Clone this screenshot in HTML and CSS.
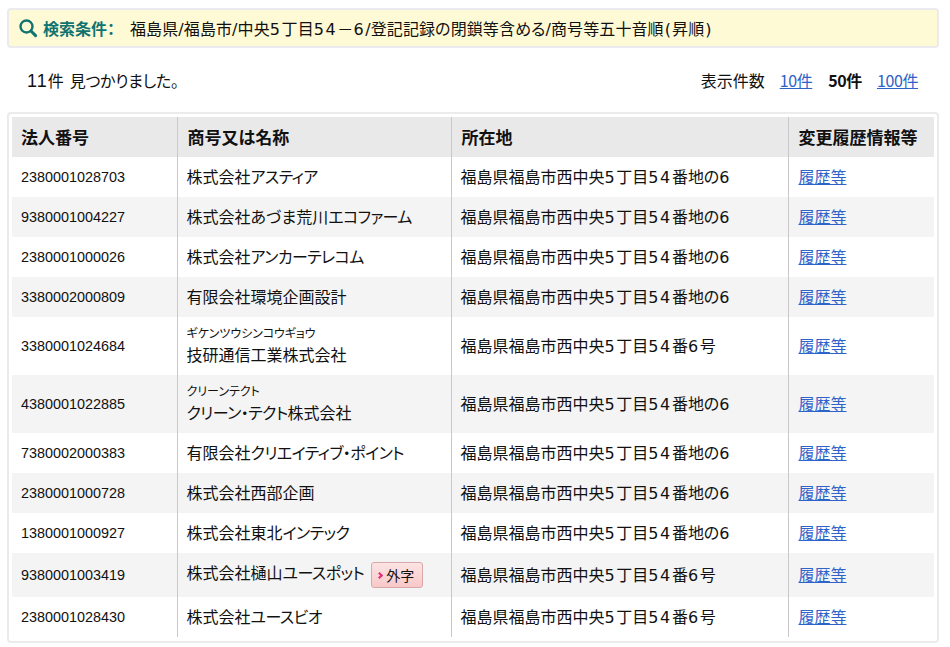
FILE: index.html
```html
<!DOCTYPE html>
<html lang="ja">
<head>
<meta charset="utf-8">
<title>検索結果</title>
<link rel="stylesheet" href="styles.css">
</head>
<body>
<div class="condition">
  <svg class="lens" width="20" height="20" viewBox="0 0 20 20"><circle cx="8.5" cy="8.5" r="6" fill="none" stroke="#0f7470" stroke-width="2.4"/><path d="M13 13l4.6 4.6" stroke="#0f7470" stroke-width="3" stroke-linecap="round"/></svg>
  <span class="cond-label">検索条件：</span>
  <span class="cond-text">福島県/福島市/中央<span class="d">5</span>丁目<span class="d">54</span>－<span class="d">6</span>/登記記録の閉鎖等含める/商号等五十音順<span class="p">(</span>昇順<span class="p">)</span></span>
</div>
<div class="summary">
  <div class="count"><span class="count-num">11</span>件 見つかりました。</div>
  <div class="pager">
    <span class="pager-label">表示件数</span>
    <a href="#">10件</a>
    <span class="pager-current">50件</span>
    <a href="#">100件</a>
  </div>
</div>
<div class="result-box">
  <table class="result">
    <colgroup><col class="c1"><col class="c2"><col class="c3"><col class="c4"></colgroup>
    <thead>
      <tr><th>法人番号</th><th>商号又は名称</th><th>所在地</th><th>変更履歴情報等</th></tr>
    </thead>
    <tbody>
      <tr><td class="num">2380001028703</td><td class="name">株式会社<span class="k">アスティア</span></td><td class="addr">福島県福島市西中央<span class="d">5</span>丁目<span class="d">54</span>番地の<span class="d">6</span></td><td class="hist"><a href="#">履歴等</a></td></tr>
      <tr><td class="num">9380001004227</td><td class="name">株式会社あづま荒川<span class="k">エコファーム</span></td><td class="addr">福島県福島市西中央<span class="d">5</span>丁目<span class="d">54</span>番地の<span class="d">6</span></td><td class="hist"><a href="#">履歴等</a></td></tr>
      <tr><td class="num">2380001000026</td><td class="name">株式会社<span class="k">アンカーテレコム</span></td><td class="addr">福島県福島市西中央<span class="d">5</span>丁目<span class="d">54</span>番地の<span class="d">6</span></td><td class="hist"><a href="#">履歴等</a></td></tr>
      <tr><td class="num">3380002000809</td><td class="name">有限会社環境企画設計</td><td class="addr">福島県福島市西中央<span class="d">5</span>丁目<span class="d">54</span>番地の<span class="d">6</span></td><td class="hist"><a href="#">履歴等</a></td></tr>
      <tr class="tall"><td class="num">3380001024684</td><td class="name"><div class="kana">ギケンツウシンコウギョウ</div>技研通信工業株式会社</td><td class="addr">福島県福島市西中央<span class="d">5</span>丁目<span class="d">54</span>番<span class="d">6</span>号</td><td class="hist"><a href="#">履歴等</a></td></tr>
      <tr class="tall"><td class="num">4380001022885</td><td class="name"><div class="kana">クリーンテクト</div><span class="k">クリーン・テクト</span>株式会社</td><td class="addr">福島県福島市西中央<span class="d">5</span>丁目<span class="d">54</span>番地の<span class="d">6</span></td><td class="hist"><a href="#">履歴等</a></td></tr>
      <tr><td class="num">7380002000383</td><td class="name">有限会社<span class="k">クリエイティブ・ポイント</span></td><td class="addr">福島県福島市西中央<span class="d">5</span>丁目<span class="d">54</span>番地の<span class="d">6</span></td><td class="hist"><a href="#">履歴等</a></td></tr>
      <tr><td class="num">2380001000728</td><td class="name">株式会社西部企画</td><td class="addr">福島県福島市西中央<span class="d">5</span>丁目<span class="d">54</span>番地の<span class="d">6</span></td><td class="hist"><a href="#">履歴等</a></td></tr>
      <tr><td class="num">1380001000927</td><td class="name">株式会社東北<span class="k">インテック</span></td><td class="addr">福島県福島市西中央<span class="d">5</span>丁目<span class="d">54</span>番地の<span class="d">6</span></td><td class="hist"><a href="#">履歴等</a></td></tr>
      <tr class="gaiji-row"><td class="num">9380001003419</td><td><div class="name-gaiji"><span class="gaiji-name">株式会社樋山<span class="k">ユースポット</span></span><span class="gaiji"><i class="chev"></i>外字</span></div></td><td class="addr">福島県福島市西中央<span class="d">5</span>丁目<span class="d">54</span>番<span class="d">6</span>号</td><td class="hist"><a href="#">履歴等</a></td></tr>
      <tr><td class="num">2380001028430</td><td class="name">株式会社<span class="k">ユースビオ</span></td><td class="addr">福島県福島市西中央<span class="d">5</span>丁目<span class="d">54</span>番<span class="d">6</span>号</td><td class="hist"><a href="#">履歴等</a></td></tr>
    </tbody>
  </table>
</div>
</body>
</html>
```
FILE: styles.css
```css
* { box-sizing: border-box; }
body {
  margin: 0;
  padding: 8px 11px 0 7px;
  background: #fff;
  color: #111;
  font-family: "Noto Sans CJK JP", "Liberation Sans", sans-serif;
  font-size: 16px;
  font-weight: 400;
  font-feature-settings: "palt";
}
a { color: #2f63c9; }
.condition {
  display: flex;
  align-items: center;
  height: 40px;
  padding-left: 9px;
  background: #fffad6;
  border: 2px solid #ebebef;
  border-radius: 4px;
}
.lens { flex: none; margin-right: 5px; }
.cond-label { width: 87px; flex: none; color: #0f7470; font-weight: 700; font-size: 16px; }
.cond-text { font-family: "DejaVu Sans", "Noto Sans CJK JP", sans-serif; font-size: 16px; letter-spacing: 0.1px; }
.d { letter-spacing: 1.6px; }
.p { padding: 0 1px; }
.summary {
  display: flex;
  justify-content: space-between;
  align-items: center;
  height: 64px;
  padding: 0 21px 0 20px;
}
.count { word-spacing: 3px; letter-spacing: -0.3px; }
.count-num { font-size: 18px; font-family: "Liberation Sans", sans-serif; letter-spacing: 1px; }
.pager { display: flex; gap: 15px; }
.pager a, .pager-current { letter-spacing: -0.4px; }
.pager-label + a { margin-right: 1px; }
.pager-current { font-weight: 700; }
.result-box {
  height: 531px;
  padding: 3px;
  border: 2px solid #ebebeb;
  border-radius: 4px;
}
.result { width: 922px; table-layout: fixed; border-collapse: collapse; }
.c1 { width: 165px; }
.c2 { width: 274px; }
.c3 { width: 337px; }
.c4 { width: 146px; }
th {
  height: 40px;
  padding: 0 9px 2px 10px;
  background: #e9e9e9;
  font-size: 17px;
  font-weight: 700;
  text-align: left;
  white-space: nowrap;
}
th:first-child { padding-left: 9px; }
td { height: 40px; padding: 0 9px; white-space: nowrap; line-height: 24px; }
th + th, td + td { border-left: 1px solid #c9c9c9; }
tbody tr:nth-child(even) { background: #f4f4f4; }
tr.tall td { height: 58px; }
tr.gaiji-row td { height: 44px; }
.num { font-family: "Liberation Sans", sans-serif; font-size: 14.4px; }
.name { padding-bottom: 2px; }
.hist { padding: 0 9px 2px 10px; }
.k { letter-spacing: -0.6px; }
.addr { font-family: "DejaVu Sans", "Noto Sans CJK JP", sans-serif; padding-top: 2px; }
.kana { font-size: 12px; line-height: 18px; }
.name-gaiji { display: flex; align-items: center; gap: 7px; }
.gaiji-name { padding-bottom: 6px; }
.gaiji {
  display: inline-flex;
  align-items: center;
  height: 26px;
  width: 52px;
  padding-left: 5px;
  font-size: 14px;
  background: linear-gradient(#fde4e4, #f8c8c8);
  border: 1px solid #d9a9a9;
  border-radius: 3px;
}
.chev {
  width: 5px; height: 5px; margin-right: 4px;
  border-top: 2px solid #e0307a; border-right: 2px solid #e0307a;
  transform: rotate(45deg);
}
```
